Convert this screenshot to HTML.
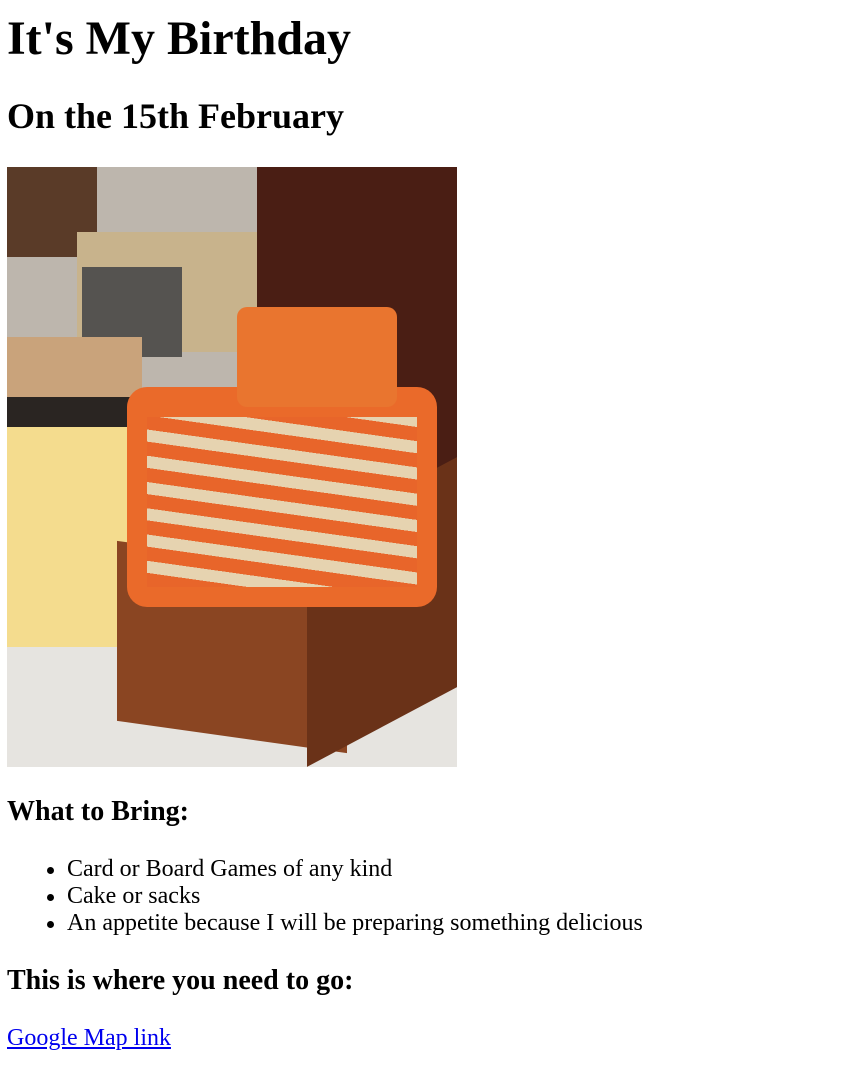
<!DOCTYPE html>
<html><head><meta charset="utf-8"><style>
body{margin:0;background:#fff;font-family:"Liberation Serif",serif;color:#000;width:845px;height:1069px;position:relative;overflow:hidden}
.t{position:absolute;left:7px;line-height:1;white-space:nowrap;margin:0}
h1.t{font-size:48px;top:15px;font-weight:bold}
h2.t{font-size:36px;top:98px;font-weight:bold}
h3.t{font-size:28px;font-weight:bold}
.p{font-size:24px}
.li{position:absolute;left:67px;font-size:24px;line-height:1}
.li:before{content:"";position:absolute;left:-20px;top:10px;width:7px;height:7px;border-radius:50%;background:#000}
a{color:#0000ee;text-decoration:underline}
#img{position:absolute;left:7px;top:167px;width:450px;height:600px;overflow:hidden;background:#d8d4cc}
#img div{position:absolute}
</style></head><body>
<h1 class="t">It's My Birthday</h1>
<h2 class="t">On the 15th February</h2>
<div id="img">
 <div style="left:0;top:0;width:250px;height:240px;background:#bdb6ad"></div>
 <div style="left:0;top:0;width:90px;height:90px;background:#5a3b28"></div>
 <div style="left:70px;top:65px;width:185px;height:120px;background:#c8b38c"></div>
 <div style="left:75px;top:100px;width:100px;height:90px;background:#555350"></div>
 <div style="left:250px;top:0;width:200px;height:330px;background:#4a1e14"></div>
 <div style="left:0;top:170px;width:135px;height:80px;background:#c9a37b"></div>
 <div style="left:0;top:230px;width:240px;height:40px;background:#2a2522"></div>
 <div style="left:0;top:260px;width:160px;height:320px;background:#f4dc8e"></div>
 <div style="left:0;top:480px;width:450px;height:120px;background:#e6e4e0"></div>
 <div style="left:110px;top:390px;width:230px;height:180px;background:#8a4522;transform:skewY(8deg)"></div>
 <div style="left:300px;top:330px;width:150px;height:230px;background:#6a3218;transform:skewY(-28deg)"></div>
 <div style="left:120px;top:220px;width:310px;height:220px;background:#ea6a2a;border-radius:20px"></div>
 <div style="left:230px;top:140px;width:160px;height:100px;background:#e9752f;border-radius:10px"></div>
 <div style="left:140px;top:250px;width:270px;height:170px;background:repeating-linear-gradient(8deg,#e8652a 0 14px,#e6d3b0 14px 26px)"></div>
</div>
<h3 class="t" style="top:798px">What to Bring:</h3>
<div class="li" style="top:857px">Card or Board Games of any kind</div>
<div class="li" style="top:884px">Cake or sacks</div>
<div class="li" style="top:911px">An appetite because I will be preparing something delicious</div>
<h3 class="t" style="top:967px">This is where you need to go:</h3>
<div class="t p" style="top:1026px"><a>Google Map link</a></div>
</body></html>
